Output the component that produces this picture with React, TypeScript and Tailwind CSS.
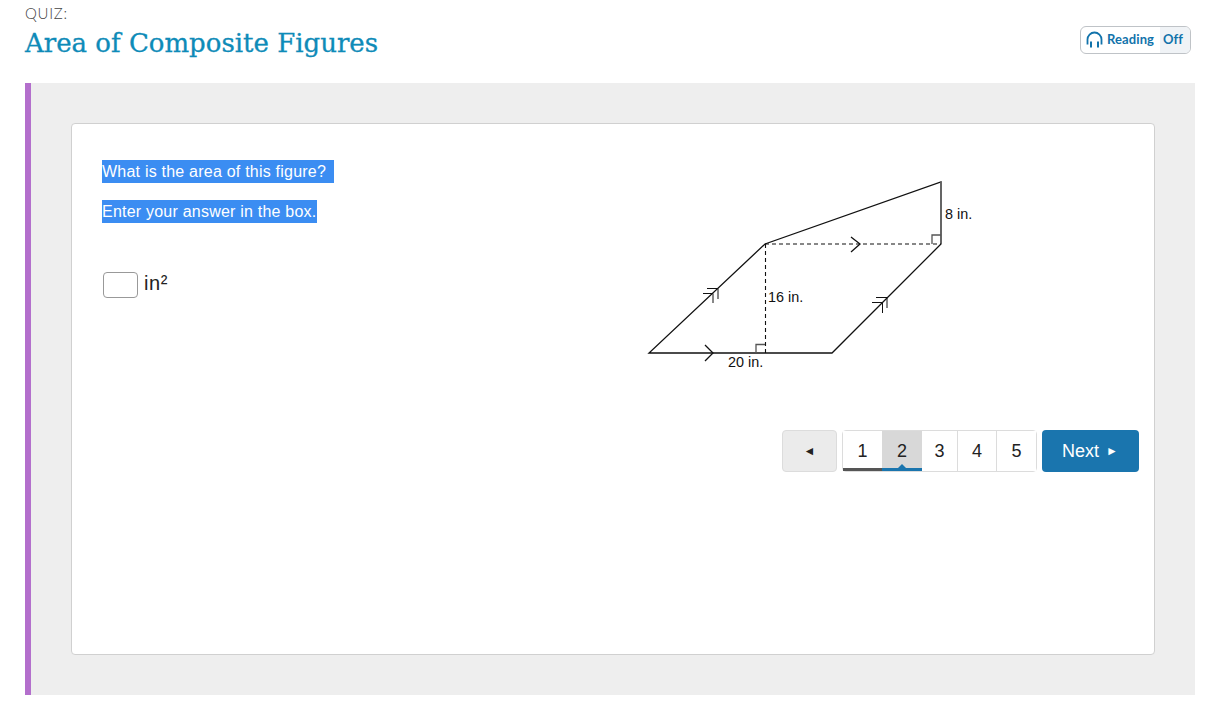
const pages = [
  { label: "1", width: "w-[39px]", tone: "done" },
  { label: "2", width: "w-[40px]", tone: "current" },
  { label: "3", width: "w-[36px]", tone: "" },
  { label: "4", width: "w-[39px]", tone: "" },
  { label: "5", width: "w-[39px]", tone: "" },
];

function Headphones() {
  return (
    <svg width="17" height="18" viewBox="0 0 17 18" fill="none" stroke="#1273ab" strokeWidth="1.8">
      <path d="M1.5 13.5V8.5a7 7 0 0 1 14 0v5" />
      <path d="M5 10.5v6M12 10.5v6" strokeWidth="2" />
    </svg>
  );
}

function Figure() {
  return (
    <svg width="340" height="200" viewBox="640 175 340 200" fill="none" stroke="#111" strokeWidth="1.3">
      {/* outline */}
      <path d="M649 353H832L941 244V182L765 244Z" />
      <path d="M941 182V244" stroke="#666" strokeWidth="1.7" />
      {/* dashed heights */}
      <path d="M765 244H941M765.5 244V353" strokeDasharray="4 3" strokeWidth="1.1" />
      {/* right angles */}
      <path d="M756 353V344.5H765" stroke="#555" />
      <path d="M932 244V235H941" stroke="#555" />
      {/* parallel marks */}
      <path d="M705 345L713 353L705 361" />
      <path d="M851 237L860 244L851 252" />
      <path d="M707 288.5H718V299M703 293.5H713V303" strokeWidth="1" />
      <path d="M876 297.5H887V308M872 302.5H882.5V313" strokeWidth="1" />
      <g fill="#111" stroke="none" fontFamily="'Liberation Sans', sans-serif" fontSize="14.4">
        <text x="768" y="302">16 in.</text>
        <text x="728" y="367">20 in.</text>
        <text x="945" y="218.5">8 in.</text>
      </g>
    </svg>
  );
}

export default function App() {
  return (
    <div className="min-h-[719px] bg-white font-['Liberation_Sans',sans-serif]">
      <header className="flex h-[83px] items-start justify-between pl-[25px] pr-[29px]">
        <div>
          <div className="font-['Lato',sans-serif] text-[15px] font-light leading-[27px] tracking-[0.7px] text-[#444]">QUIZ:</div>
          <h1 className="mt-px font-['DejaVu_Serif',serif] text-[26px] leading-[31px] text-[#0e8bb8] [-webkit-text-stroke:0.3px_#0e8bb8]">
            Area of Composite Figures
          </h1>
        </div>
        <button className="mt-[26px] flex h-[28px] w-[111px] items-stretch overflow-hidden rounded-md border border-[#bfc3c7] font-['Lato',sans-serif] text-[13px] font-bold tracking-[0.1px] text-[#1273ab]">
          <span className="flex flex-1 items-center gap-[4px] pl-[5px]">
            <Headphones />
            Reading
          </span>
          <span className="flex w-[30px] items-center bg-[#f0f3f6] pl-[3px]">Off</span>
        </button>
      </header>

      <main className="mx-[25px] h-[612px] border-l-[6px] border-[#b36fcc] bg-[#eeeeee] pl-10 pt-10">
        <section className="h-[532px] w-[1084px] rounded border border-[#d0d0d0] bg-white pl-[30px] pr-[15px] pt-9">
          <div className="flex h-[270px] items-start justify-between">
            <div className="tracking-[0.22px]">
              <p className="mb-[17px] inline-block bg-[#3b8df2] pr-2 text-base leading-[23px] text-white">
                What is the area of this figure?
              </p>
              <br />
              <p className="inline-block bg-[#3b8df2] text-base leading-[23px] text-white">
                Enter your answer in the box.
              </p>
              <div className="ml-px mt-[47px] flex items-center gap-[6px]">
                <input className="h-[26px] w-[35px] rounded-sm border border-[#999] bg-white" aria-label="Answer" />
                <span className="mb-[3px] text-xl leading-6 tracking-[0.6px] text-[#222]">in²</span>
              </div>
            </div>
            <div className="mr-[159px] mt-[15px]">
              <Figure />
            </div>
          </div>

          <nav className="flex h-[42px] justify-end gap-[5px] text-lg text-[#222]">
            <button className="flex w-[55px] items-center justify-center rounded-sm border border-[#dcdcdc] bg-[#ebebeb] text-xs">
              ◄
            </button>
            <div className="flex rounded-sm border border-[#dcdcdc]">
              {pages.map((p, i) => (
                <button
                  key={p.label}
                  className={`relative flex items-center justify-center ${p.width} ${
                    p.tone === "current" ? "bg-[#d8d8d8]" : "bg-white"
                  } ${i > 1 && i < 4 ? "border-r border-[#dcdcdc]" : ""}`}
                >
                  {p.label}
                  {p.tone === "done" && <span className="absolute inset-x-0 bottom-0 h-[3px] bg-[#555]" />}
                  {p.tone === "current" && (
                    <>
                      <span className="absolute inset-x-0 bottom-0 h-[3px] bg-[#1a75ae]" />
                      <span className="absolute bottom-[3px] left-1/2 h-0 w-0 -translate-x-1/2 border-x-[4px] border-b-[4px] border-x-transparent border-b-[#1a75ae]" />
                    </>
                  )}
                </button>
              ))}
            </div>
            <button className="flex w-[97px] items-center gap-[7px] rounded-sm bg-[#1a75ae] pl-5 text-white">
              Next <span className="text-xs">►</span>
            </button>
          </nav>
        </section>
      </main>
    </div>
  );
}
